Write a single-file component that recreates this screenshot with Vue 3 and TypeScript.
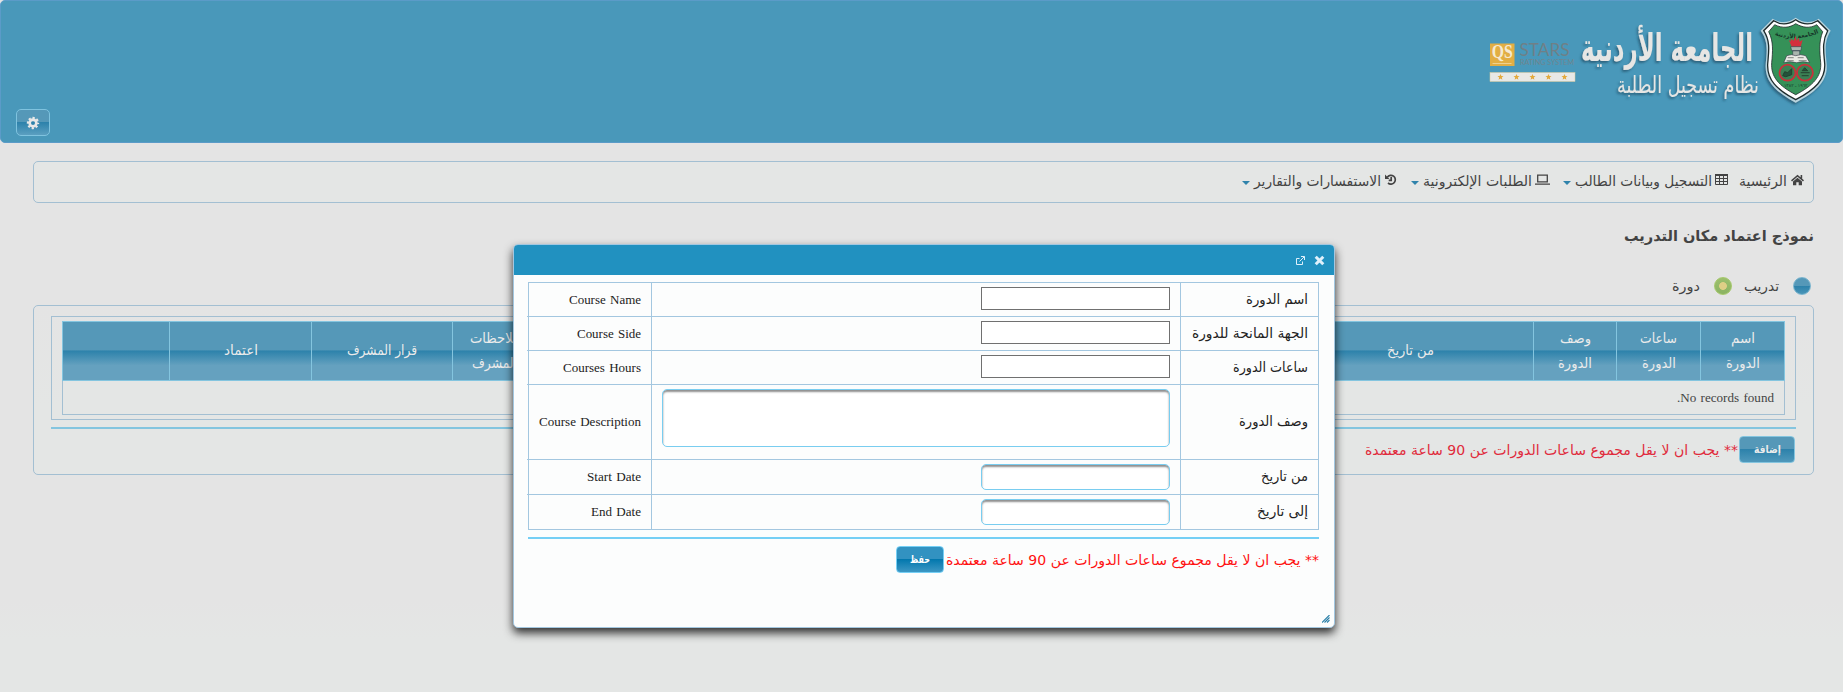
<script setup lang="ts">
import { h, ref } from 'vue'

interface LabelProps { t: string; w: number; ltr?: boolean }

// A single line of text fitted to a fixed measure, baseline 17px from the top.
const Label = (p: LabelProps) =>
  h('svg', { class: 'fit', width: p.w, height: 24 }, [
    h('text', {
      x: p.w / 2, y: 17, 'text-anchor': 'middle', direction: p.ltr ? 'ltr' : 'rtl',
      textLength: p.w, lengthAdjust: 'spacingAndGlyphs',
    }, p.t),
  ])
Label.props = ['t', 'w', 'ltr']

interface MenuItem { icon: string; text: string; w: number; sub: boolean }
const menu: MenuItem[] = [
  { icon: 'home', text: 'الرئيسية', w: 48, sub: false },
  { icon: 'grid', text: 'التسجيل وبيانات الطالب', w: 137, sub: true },
  { icon: 'laptop', text: 'الطلبات الإلكترونية', w: 109, sub: true },
  { icon: 'history', text: 'الاستفسارات والتقارير', w: 127, sub: true },
]

interface Line { t: string; w: number }
const columns: Line[][] = [
  [{ t: 'اسم', w: 24 }, { t: 'الدورة', w: 34 }],
  [{ t: 'ساعات', w: 37 }, { t: 'الدورة', w: 34 }],
  [{ t: 'وصف', w: 31 }, { t: 'الدورة', w: 34 }],
  [{ t: 'من تاريخ', w: 47 }],
  [],
  [{ t: 'ملاحظات', w: 50 }, { t: 'المشرف', w: 45 }],
  [{ t: 'قرار المشرف', w: 70 }],
  [{ t: 'اعتماد', w: 34 }],
  [],
]

interface Field { ar: string; aw: number; en: string; ew: number; kind: string }
const fields: Field[] = [
  { ar: 'اسم الدورة', aw: 62, en: 'Course Name', ew: 72, kind: 'plain' },
  { ar: 'الجهة المانحة للدورة', aw: 116, en: 'Course Side', ew: 64, kind: 'plain' },
  { ar: 'ساعات الدورة', aw: 75, en: 'Courses Hours', ew: 78, kind: 'plain' },
  { ar: 'وصف الدورة', aw: 69, en: 'Course Description', ew: 102, kind: 'area' },
  { ar: 'من تاريخ', aw: 47, en: 'Start Date', ew: 54, kind: 'date' },
  { ar: 'إلى تاريخ', aw: 51, en: 'End Date', ew: 50, kind: 'date' },
]
const values = ref<string[]>(fields.map(() => ''))
const note = '** يجب ان لا يقل مجموع ساعات الدورات عن 90 ساعة معتمدة'
const stars = [30.5, 46.5, 62.5, 78.5, 94.5]
</script>

<template>
  <div class="page">
    <header class="head">
      <svg class="logo" width="373" height="120" viewBox="0 0 373 120">
        <defs>
          <filter id="soft" x="-10%" y="-10%" width="120%" height="130%">
            <feDropShadow dx="-1.5" dy="2" stdDeviation="1.2" flood-color="#1d4a62" flood-opacity=".65" />
          </filter>
          <path id="arc" d="M303 34 Q326 42 349 32" />
        </defs>
        <rect x="20" y="43.500" width="24.500" height="22.500" fill="#e2ae43" />
        <text x="32.200" y="57.500" text-anchor="middle" class="qs" textLength="21" lengthAdjust="spacingAndGlyphs">QS</text>
        <path d="M22.500 63.500h19" stroke="#f2d9a3" stroke-width=".8" />
        <text x="49.500" y="55.700" class="stars" textLength="50" lengthAdjust="spacingAndGlyphs">STARS</text>
        <text x="50" y="65" class="rating" textLength="54" lengthAdjust="spacingAndGlyphs">RATING SYSTEM</text>
        <rect x="20" y="72.500" width="85" height="9" fill="#e8e8e6" stroke="#dcc99a" stroke-width=".5" />
        <path
          v-for="x in stars" :key="x" fill="#e2a93c" :transform="`translate(${x} 77)`"
          d="M0-3 .9-.9 3-.9 1.300.5 1.900 2.700 0 1.400-1.900 2.700-1.300.5-3-.9-.9-.9Z"
        />
        <g filter="url(#soft)" fill="#e6e6e4" direction="rtl">
          <text x="197" y="61" text-anchor="middle" class="uni" textLength="172" lengthAdjust="spacingAndGlyphs">الجامعة الأردنية</text>
          <text x="218" y="93" text-anchor="middle" class="sys" textLength="142" lengthAdjust="spacingAndGlyphs">نظام تسجيل الطلبة</text>
        </g>
        <g transform="translate(.7 .7)">
          <g filter="url(#soft)">
            <path d="M302 18c8 5 16 4 23-1 7 5 15 6 23 1l12 12c-7 11-5 21-4 34 1 17-11 27-31 38-20-11-31-21-30-38 1-13 3-23-5-34Z" fill="#b9d5df" />
            <path d="M303 20c8 5 15 4 22-1 7 5 14 6 22 1l10 10c-6 11-4 21-3 33 1 16-10 26-29 36-19-10-29-20-28-36 1-12 3-22-4-33Z" fill="#fff" stroke="#1e2a2b" stroke-width="1.300" />
            <path d="M304 24c8 4 15 3 21-1 7 4 14 5 21 1l6 7c-4 10-3 20-2 31 1 14-8 23-25 32-17-9-25-18-24-32 1-11 2-21-3-31Z" fill="#369158" stroke="#1e2a2b" stroke-width=".8" />
          </g>
          <text class="arc" direction="rtl"><textPath href="#arc" startOffset="50%" text-anchor="middle">الجامعة الأردنية</textPath></text>
          <path d="M321 46h9l2-7-3 2-1-4-2 3-1-5-2 5-3-2 0 3-2-2Z" fill="#d32f3c" />
          <path d="M320 46h11l-1 4h-9ZM322 50h7v6h-7Z" fill="#a9b5ae" stroke="#234" stroke-width=".5" />
          <path d="M316 55q5-2 9 0 5-2 10 0l4 7q-7-2-13 0-7-2-13 0Z" fill="#e8eae4" stroke="#334" stroke-width=".6" />
          <path d="M317 57h6M327 57h6M316 60h7M328 60h8" stroke="#555" stroke-width=".7" />
          <g fill="#3b8054" stroke="#c8313b" stroke-width="1.800">
            <circle cx="316.800" cy="72" r="8" /><circle cx="334.200" cy="72" r="8" />
          </g>
          <path d="M312 75l2-4 3 1 4-4v6l-6 2ZM330 72h9M331 75h7M331.500 70h5.500l-3-3Z" fill="#24523a" stroke="#24402f" stroke-width="1" />
          <text x="325" y="86" text-anchor="middle" class="year">١٩٦٢ ـ ١٣٨٢</text>
        </g>
      </svg>
      <button class="gear" type="button" aria-label="Settings">
        <svg width="14" height="14" viewBox="0 0 14 14">
          <path d="M7 2.300a4.700 4.700 0 1 0 0 9.400 4.700 4.700 0 0 0 0-9.400Zm0 2.700a2 2 0 1 1 0 4 2 2 0 0 1 0-4Z" fill="#e8e8e8" fill-rule="evenodd" />
          <circle cx="7" cy="7" r="5.100" fill="none" stroke="#e8e8e8" stroke-width="2.200" stroke-dasharray="2.200 1.805" stroke-dashoffset="1.100" />
        </svg>
      </button>
    </header>

    <nav class="menubar">
      <a v-for="m in menu" :key="m.icon" :class="['item', m.icon]">
        <svg v-if="m.icon === 'home'" width="13" height="12" viewBox="0 0 13 12">
          <path d="M6.500 3.800 11 7.600V11.300H7.700V8.300H5.300v3H2V7.600Z" fill="currentColor" />
          <path d="M.5 6.800 6.500 1.700l6 5.100M10.400 1v3.500" fill="none" stroke="currentColor" stroke-width="1.600" />
        </svg>
        <svg v-else-if="m.icon === 'grid'" width="13" height="12" viewBox="0 0 13 12">
          <path d="M.5 1.500h12v9H.5ZM.5 4.500h12M.5 7.500h12M4.500 2v8.500M8.500 2v8.500" fill="none" stroke="currentColor" />
          <path d="M0 0h13v2H0Z" fill="currentColor" />
        </svg>
        <svg v-else-if="m.icon === 'laptop'" width="15" height="12" viewBox="0 0 15 12">
          <path d="M2.700 1.200h9.600v6.600H2.700ZM0 10.200h15" fill="none" stroke="currentColor" stroke-width="1.300" />
        </svg>
        <svg v-else width="12" height="12" viewBox="0 0 12 12">
          <path d="M2.300 3.200A4.400 4.400 0 1 1 3 9M6.200 3v3.300H3.700" fill="none" stroke="currentColor" stroke-width="1.700" />
          <path d="M0 .5v4.400h4.400Z" fill="currentColor" />
        </svg>
        <Label :t="m.text" :w="m.w" />
        <span v-if="m.sub" class="caret" />
      </a>
    </nav>

    <h3 class="title"><Label t="نموذج اعتماد مكان التدريب" :w="190" /></h3>

    <div class="radios">
      <span class="dot" /><Label t="تدريب" :w="35" />
      <span class="dot on" /><Label t="دورة" :w="28" />
    </div>

    <main class="panel">
      <div class="frame">
        <div class="table">
          <div class="thead">
            <div v-for="(c, i) in columns" :key="i" class="th">
              <Label v-for="l in c" :key="l.t" :t="l.t" :w="l.w" />
            </div>
          </div>
          <div class="empty"><Label t="No records found." :w="97" /></div>
        </div>
      </div>
      <hr>
      <div class="actions">
        <button class="btn add" type="button"><Label t="إضافة" :w="27" /></button>
        <span class="note"><Label :t="note" :w="373" /></span>
      </div>
    </main>

    <section class="dialog">
      <div class="bar">
        <svg width="11" height="11" viewBox="0 0 11 11"><path d="M1.700 1.700l7.600 7.600M9.300 1.700 1.700 9.300" stroke="#dff0fb" stroke-width="3" /></svg>
        <svg width="9" height="9" viewBox="0 0 9 9"><path d="M3.500 2.500h-3v6h6v-3M5 .5h3.500V4M8.300.7 3.500 5.500" fill="none" stroke="#dff0fb" /></svg>
      </div>
      <div class="body">
        <div class="form">
          <div v-for="(f, i) in fields" :key="f.en" :class="['row', f.kind]">
            <div class="cell ar"><Label :t="f.ar" :w="f.aw" /></div>
            <div class="cell mid">
              <textarea v-if="f.kind === 'area'" v-model="values[i]" />
              <input v-else v-model="values[i]" type="text">
            </div>
            <div class="cell en"><Label :t="f.en" :w="f.ew" ltr /></div>
          </div>
        </div>
        <hr>
        <div class="actions">
          <span class="note"><Label :t="note" :w="373" /></span>
          <button class="btn save" type="button"><Label t="حفظ" :w="20" /></button>
        </div>
      </div>
      <svg class="grip" width="8" height="8" viewBox="0 0 8 8"><path d="M0 7.500 7.500 0M2.500 7.500l5-5M5 7.500 7.500 5" stroke="#2a7fa8" stroke-width="1.100" /></svg>
    </section>
  </div>
</template>

<style>
html, body { margin: 0; background: #e4e4e4; overflow: hidden; }
.fit { display: block; overflow: visible; flex: none; }
.fit text { fill: currentColor; }
</style>

<style scoped>
* { box-sizing: border-box; }
.page {
  position: relative; direction: rtl; height: 692px; overflow: hidden;
  background: linear-gradient(#e4e4e4 0 600px, #e4e6e5 640px);
  font-family: "DejaVu Sans", sans-serif; font-size: 14px; color: #434343;
}
.head {
  height: 143px; background: #4998ba; border: 1px solid #5b9bc8; border-radius: 5px;
  display: flex; justify-content: space-between; align-items: flex-start;
}
.logo { margin: -1px -1px 0 0; flex: none; direction: ltr; }
.qs { font: bold 18px "Liberation Serif", serif; fill: #f5ead2; }
.stars { font: 17px Lato, sans-serif; fill: #6f8087; }
.rating { font: 7px Lato, sans-serif; fill: #6f858e; }
.uni { font: bold 38px "DejaVu Sans Condensed", "DejaVu Sans", sans-serif; }
.sys { font: 24px "DejaVu Sans Condensed", "DejaVu Sans", sans-serif; }
.arc { font: bold 6px "DejaVu Sans", sans-serif; fill: #17382a; }
.year { font: 4.500px "DejaVu Sans", sans-serif; fill: #17382a; }
.gear {
  width: 34px; height: 27px; margin: 108px 0 0 15px; padding: 0; border: 1px solid #7fc3df;
  border-radius: 5px; display: flex; align-items: center; justify-content: center;
  background: linear-gradient(#5598b8 0 48%, #2d82ab 50%, #5b9fc0);
}
.menubar {
  margin: 18px 29px 0 33px; height: 42px; border: 1px solid #a3bfd2; border-radius: 5px;
  background: #e4e6e5; padding: 0 9px; display: flex; align-items: flex-start;
}
.item { display: flex; align-items: flex-start; gap: 4px; margin-left: 11px; padding-top: 7px; }
.item > svg:first-child { margin-top: 5px; flex: none; }
.grid { margin-left: 13px; gap: 3px; }
.laptop { margin-left: 14px; gap: 3px; }
.caret { margin: 12px 0 0; border: solid transparent; border-width: 4px 4px 0; border-top-color: #2f83ab; }
.grid .caret, .laptop .caret { margin-right: 1px; }
.title { margin: 21px 29px 0 0; font-size: 15px; font-weight: bold; }
.radios { margin: 26px 32px 0 0; height: 24px; display: flex; align-items: flex-start; }
.dot {
  width: 18px; height: 18px; border-radius: 50%; border: 1px solid #79b4ce; margin: 3px 0 0 14px;
  background: linear-gradient(#5598b8 48%, #2d82ab 52%, #4a95b8);
}
.dot.on {
  margin: 3px 12px 0 14px; border-color: #a6c96b;
  background: radial-gradient(circle, #dfcf86 0 3.500px, transparent 4.300px), linear-gradient(#9cbf6d, #8bb362);
}
.panel {
  margin: 7px 29px 0 33px; height: 170px; border: 1px solid #a3bfd2; border-radius: 5px;
  padding: 10px 17px; background: linear-gradient(#e4e4e4, #e4e6e5 60%);
}
.frame { height: 104px; border: 1px solid #a3bfd2; padding: 4px 10px; }
.table { height: 94px; border: 1px solid #a3bfd2; background: #e4e6e5; }
.thead {
  display: grid; height: 60px; margin: -1px; border: 1px solid #84c5df;
  grid-template-columns: 84px 84px 83px 246px 1fr 84px 141px 142px 106px;
  background: linear-gradient(#5598b8 0 48%, #2d82ab 50%, #65a1bf 75%); color: #ebebeb;
}
.th {
  display: flex; flex-direction: column; align-items: center; justify-content: center; gap: 1px;
  border-left: 1px solid #84c5df; padding-bottom: 2px;
}
.th:last-child { border-left: 0; }
.empty { padding: 5px 10px 0; font-family: "Liberation Serif", serif; font-size: 12.500px; word-spacing: 1px; }
hr { margin: 7px 0 0; border: 0; height: 2px; background: #84c5df; }
.actions { display: flex; align-items: flex-start; margin-top: 7px; }
.note { color: #e02b3c; padding: 2px 1px 0 0; }
.btn {
  height: 27px; padding: 0; border: 1px solid #84c5df; border-radius: 4px; color: #ebebeb; flex: none;
  display: flex; justify-content: center; align-items: flex-start;
  font: bold 11px "DejaVu Sans", sans-serif; background: linear-gradient(#5598b8 0 48%, #2d82ab 50%, #4f98bb);
}
.btn .fit { margin-top: -1px; }
.add { width: 56px; margin-right: 1px; }
.dialog {
  position: absolute; left: 513px; top: 244px; width: 822px; height: 384px; background: #fcfdfd;
  border: 1px solid #a3c7e0; border-radius: 5px; box-shadow: 0 5px 10px rgba(0, 0, 0, .8); color: #222;
}
.bar {
  height: 30px; background: #2191c0; border-radius: 4px 4px 0 0; padding: 10px 9px 0 0;
  display: flex; align-items: flex-start; gap: 9px;
}
.bar svg + svg { margin-top: 1px; }
.body { padding: 7px 15px 0 14px; }
.form { border: 1px solid #a3c7e0; height: 248px; display: grid; grid-template-rows: 34px 34px 34px 75px 35px 34px; }
.row { display: grid; grid-template-columns: 137px 1fr 124px; border-bottom: 1px solid #a3c7e0; }
.row:last-child { border-bottom: 0; }
.cell { display: flex; align-items: flex-start; padding: 4px 10px 0; }
.area .ar, .area .en { padding-top: 24px; }
.mid { border: solid #a3c7e0; border-width: 0 1px; }
.en { direction: ltr; justify-content: flex-end; font-family: "Liberation Serif", serif; font-size: 12.500px; word-spacing: 1px; }
input, textarea { display: block; margin: 0; padding: 0; background: #fff; outline: 0; resize: none; font-size: 13px; }
.plain input { width: 189px; height: 23px; border: 1px solid #707070; border-radius: 0; }
.date input, textarea {
  width: 189px; height: 26px; border: 1px solid #79cdf0; border-radius: 5px;
  box-shadow: inset 0 2px 2px #8f8f8f;
}
textarea { width: 508px; height: 58px; }
.body hr { background: #75cff5; }
.body .note { color: #f11; padding-right: 0; }
.save { width: 48px; margin-right: 2px; border-color: #75cff5; color: #fff; background: linear-gradient(#3292c1 0 48%, #0378ae 50%, #3d97c4); }
.grip { position: absolute; right: 4px; bottom: 4px; }
</style>
